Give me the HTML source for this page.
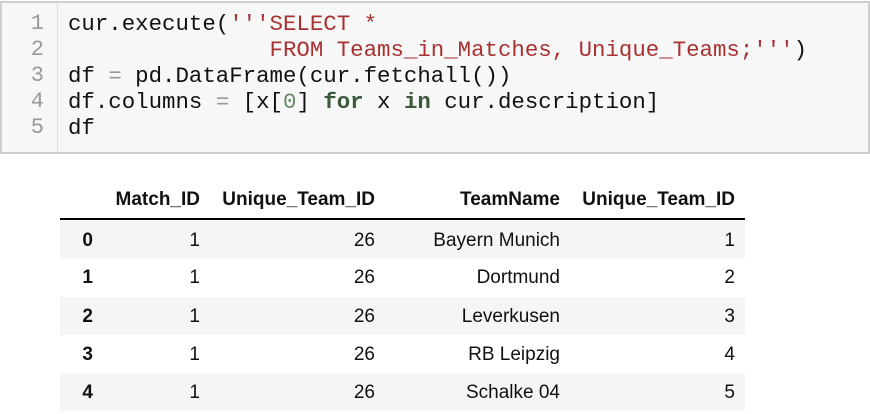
<!DOCTYPE html><html><head><style>
body{margin:0;width:870px;height:414px;background:#fff;overflow:hidden;position:relative;font-family:"Liberation Sans",sans-serif}
.code{position:absolute;left:0;top:1px;width:866px;height:149px;border:2px solid #cfcfcf;background:#f7f7f7}
.gut{position:absolute;left:0;top:0;width:55px;height:149px;border-right:1px solid #ddd}
.ln{position:absolute;left:0;width:42px;text-align:right;color:#999;font:22px "Liberation Mono",monospace}
.cl{position:absolute;left:66px;font:22.4px "Liberation Mono",monospace;color:#111;white-space:pre}
.s{color:#a83232}.k{color:#3a5a3a;font-weight:bold}.o{color:#999}.n{color:#6a8a6a}
.c{position:absolute;font-size:19px;color:#111;text-align:right}
.h{font-weight:bold}
.row{position:absolute;left:60px;width:685px;height:38px}
</style></head><body>
<div class="code"><div class="gut"></div>
<div class="ln" style="top:8px">1</div><div class="ln" style="top:34px">2</div><div class="ln" style="top:60px">3</div><div class="ln" style="top:86px">4</div><div class="ln" style="top:112px">5</div>
<div class="cl" style="top:8px">cur.execute(<span class="s">'''SELECT *</span></div>
<div class="cl" style="top:34px"><span class="s">               FROM Teams_in_Matches, Unique_Teams;'''</span>)</div>
<div class="cl" style="top:60px">df <span class="o">=</span> pd.DataFrame(cur.fetchall())</div>
<div class="cl" style="top:86px">df.columns <span class="o">=</span> [x[<span class="n">0</span>] <span class="k">for</span> x <span class="k">in</span> cur.description]</div>
<div class="cl" style="top:112px">df</div>
</div>
<div style="position:absolute;left:60px;top:218px;width:685px;height:2px;background:#000"></div>
<div class="row" style="top:221px;background:#f5f5f5"></div>
<div class="row" style="top:297px;background:#f5f5f5"></div>
<div class="row" style="top:373px;background:#f5f5f5"></div>
<div id="tb"></div>
<script>
var R=[93,200,375,560,735];
var rows=[["","Match_ID","Unique_Team_ID","TeamName","Unique_Team_ID"],["0","1","26","Bayern Munich","1"],["1","1","26","Dortmund","2"],["2","1","26","Leverkusen","3"],["3","1","26","RB Leipzig","4"],["4","1","26","Schalke 04","5"]];
var Y=[189,230,267,306,344,382],h="";
rows.forEach(function(r,i){r.forEach(function(v,j){h+='<div class="c'+((i==0||j==0)?' h':'')+'" style="top:'+Y[i]+'px;right:'+(870-R[j])+'px">'+v+'</div>'})});
document.getElementById('tb').innerHTML=h;
</script>
</body></html>
